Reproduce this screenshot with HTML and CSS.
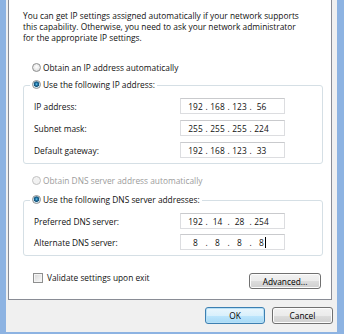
FILE: index.html
```html
<!DOCTYPE html>
<html lang="en">
<head>
  <meta charset="UTF-8" />
  <meta name="viewport" content="width=device-width, initial-scale=1.0"/>
  <title>Internet Protocol Version 4 (TCP/IPv4) Properties</title>
  <link rel="stylesheet" href="styles.css">
</head>
<body>
  <div class="window">
    <div class="dialog">
      <div class="panel">
        <p class="intro">You can get IP settings assigned automatically if your network supports<br>this capability. Otherwise, you need to ask your network administrator<br>for the appropriate IP settings.</p>

        <div class="option"><span class="radio"></span>Obtain an IP address automatically</div>

        <fieldset class="group">
          <legend><span class="legend-in"><span class="radio checked"></span>Use the following IP address:</span></legend>
          <div class="row">
            <span class="label">IP address:</span>
            <div class="ip"><span>192</span><span class="dot">.</span><span>168</span><span class="dot">.</span><span>123</span><span class="dot">.</span><span>56</span></div>
          </div>
          <div class="row">
            <span class="label">Subnet mask:</span>
            <div class="ip"><span>255</span><span class="dot">.</span><span>255</span><span class="dot">.</span><span>255</span><span class="dot">.</span><span>224</span></div>
          </div>
          <div class="row">
            <span class="label">Default gateway:</span>
            <div class="ip"><span>192</span><span class="dot">.</span><span>168</span><span class="dot">.</span><span>123</span><span class="dot">.</span><span>33</span></div>
          </div>
        </fieldset>

        <div class="option disabled"><span class="radio"></span>Obtain DNS server address automatically</div>

        <fieldset class="group dns">
          <legend><span class="legend-in"><span class="radio checked"></span>Use the following DNS server addresses:</span></legend>
          <div class="row">
            <span class="label">Preferred DNS server:</span>
            <div class="ip"><span>192</span><span class="dot">.</span><span>14</span><span class="dot">.</span><span>28</span><span class="dot">.</span><span>254</span></div>
          </div>
          <div class="row">
            <span class="label">Alternate DNS server:</span>
            <div class="ip"><span>8</span><span class="dot">.</span><span>8</span><span class="dot">.</span><span>8</span><span class="dot">.</span><span class="last">8<i class="caret"></i></span></div>
          </div>
        </fieldset>

        <div class="extra">
          <label class="check"><span class="box"></span>Validate settings upon exit</label>
          <button class="btn advanced">Advanced...</button>
        </div>
      </div>

      <div class="footer">
        <button class="btn default">OK</button>
        <button class="btn">Cancel</button>
      </div>
    </div>
  </div>
</body>
</html>
```

FILE: styles.css
```css
body {
  margin: 0;
  font-family: 'Open Sans', 'Noto Sans', sans-serif;
  font-size: 8.35px;
  color: #111;
  overflow: hidden;
}
.window {
  width: 344px;
  height: 334px;
  box-sizing: border-box;
  padding: 0 7px 2px 6px;
  background: #8db3e2;
}
.dialog {
  height: 100%;
  box-sizing: border-box;
  padding: 0 4px 0 2px;
  background: #f0f0f0;
}
.panel {
  height: 300px;
  box-sizing: border-box;
  margin-right: 1px;
  padding: 10px 8px 0 14px;
  background: #fff;
  border: 1px solid #898c95;
  border-top: 0;
}
.intro {
  margin: 0;
  line-height: 11px;
}
.option {
  display: flex;
  align-items: center;
  height: 13px;
  margin-top: 18px;
  padding-left: 9px;
}
.option.disabled {
  margin-top: 10px;
  color: #9c9c9c;
}
.radio {
  display: inline-block;
  flex: none;
  width: 9px;
  height: 9px;
  margin-right: 2px;
  box-sizing: border-box;
  border-radius: 50%;
  border: 1px solid #8e8f8f;
  background: radial-gradient(circle at 50% 40%, #fff 0, #e6e6e6 60%, #cfcfcf 100%);
}
.option.disabled .radio {
  border-color: #c2c2c2;
  background: #f2f2f2;
}
.radio.checked {
  background: radial-gradient(circle at 50% 45%, #7fd0f2 0, #2683b6 1px, #154e72 2.4px, #b9dcef 3px, #f1f8fb 4px);
}
.group {
  margin: 4px 0 0 0;
  padding: 6px 0 5px 0;
  min-width: 0;
  border: 1px solid #d5dfe5;
  border-radius: 3px;
}
.group.dns {
  margin-top: 6px;
}
.group legend {
  margin-left: 6px;
  padding: 0 2px;
  line-height: 13px;
}
.legend-in {
  display: inline-flex;
  align-items: center;
  height: 13px;
}
.row {
  display: flex;
  align-items: center;
  height: 16px;
  padding-left: 10px;
  margin-bottom: 6px;
}
.dns .row {
  margin-bottom: 5px;
}
.row:last-child {
  margin-bottom: 0;
}
.label {
  flex: none;
  width: 146px;
}
.ip {
  display: flex;
  align-items: center;
  width: 105px;
  height: 16px;
  box-sizing: border-box;
  padding-left: 5px;
  border: 1px solid #dcdde0;
  border-top-color: #c9cacd;
}
.ip span {
  width: 19px;
  text-align: center;
}
.ip .dot {
  width: 3px;
}
.ip .last {
  position: relative;
}
.caret {
  position: absolute;
  top: 0;
  margin-left: 1px;
  width: 1px;
  height: 11px;
  background: #000;
}
.extra {
  display: flex;
  justify-content: space-between;
  align-items: flex-start;
  margin-top: 13px;
}
.check {
  display: flex;
  align-items: center;
  height: 13px;
  margin-top: 2px;
  padding-left: 10px;
}
.box {
  width: 10px;
  height: 10px;
  margin-right: 4px;
  box-sizing: border-box;
  border: 1px solid #8e8f8f;
  background: linear-gradient(135deg, #d6d6d6, #fbfbfb);
  box-shadow: inset 0 0 0 1px #f4f4f4;
}
.btn {
  font-family: inherit;
  font-size: inherit;
  color: #000;
  width: 60px;
  height: 17px;
  padding: 0;
  border: 1px solid #707070;
  border-radius: 3px;
  background: linear-gradient(#f2f2f2 0, #ebebeb 50%, #dddddd 50%, #cfcfcf 100%);
  box-shadow: inset 0 0 0 1px #fcfcfc;
}
.advanced {
  width: 72px;
  height: 16px;
  margin-top: 4px;
  margin-right: 2px;
}
.btn.default {
  border-color: #3c7fb1;
  background: linear-gradient(#eaf6fd 0, #d9f0fc 50%, #bee6fd 50%, #a7d9f5 100%);
  box-shadow: inset 0 0 0 1px #b8e0f6;
}
.footer {
  display: flex;
  justify-content: flex-end;
  gap: 7px;
  padding-top: 7px;
}
.footer .btn:last-child {
  width: 61px;
}
```
